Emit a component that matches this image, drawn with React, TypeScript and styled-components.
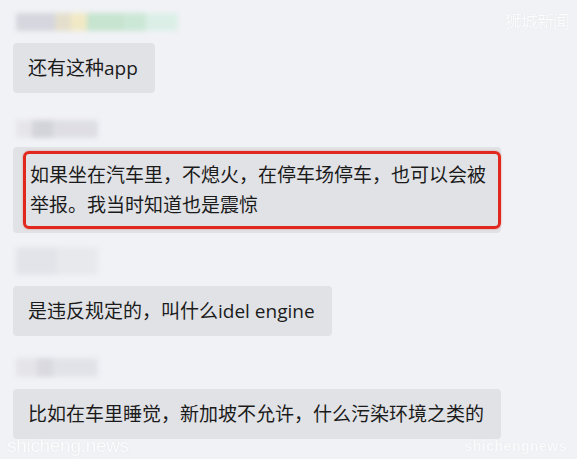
import React from 'react';
import styled, { createGlobalStyle } from 'styled-components';

const bg = '#f1f2f6';
const bubbleGrey = '#e1e2e6';
const textDark = '#1b1b1b';
const red = '#e0281f';

const GlobalStyle = createGlobalStyle`
  html, body {
    margin: 0;
    padding: 0;
    background: ${bg};
  }
  body {
    font-family: 'Open Sans', 'Noto Sans CJK SC', sans-serif;
  }
`;

interface Message {
  id: number;
  nameWidth: number;
  nameHeight: number;
  nameColors: string;
  gapAbove: number;
  gap: number;
  lines: string[];
  highlighted?: boolean;
}

const messages: Message[] = [
  {
    id: 1,
    nameWidth: 162,
    nameHeight: 18,
    nameColors:
      'linear-gradient(90deg, #d6d6de 0 24%, #e4dfcc 24% 34%, #f1e9c6 34% 44%, #c6e4cf 44% 66%, #cbe7d6 66% 80%, #dcefe7 80% 100%)',
    gapAbove: 13,
    gap: 12,
    lines: ['还有这种app'],
  },
  {
    id: 2,
    nameWidth: 82,
    nameHeight: 18,
    nameColors: 'linear-gradient(90deg, #e6e6ea 0 20%, #d3d3da 20% 45%, #dedee4 45% 100%)',
    gapAbove: 27,
    gap: 9,
    lines: ['如果坐在汽车里，不熄火，在停车场停车，也可以会被', '举报。我当时知道也是震惊'],
    highlighted: true,
  },
  {
    id: 3,
    nameWidth: 82,
    nameHeight: 28,
    nameColors: 'linear-gradient(90deg, #e3e4e9 0 50%, #e8e9ed 50% 100%)',
    gapAbove: 14,
    gap: 11,
    lines: ['是违反规定的，叫什么idel engine'],
  },
  {
    id: 4,
    nameWidth: 82,
    nameHeight: 19,
    nameColors: 'linear-gradient(90deg, #e4e4e9 0 25%, #d9d9df 25% 45%, #e2e3e8 45% 100%)',
    gapAbove: 22,
    gap: 12,
    lines: ['比如在车里睡觉，新加坡不允许，什么污染环境之类的'],
  },
];

export default function App() {
  return (
    <>
      <GlobalStyle />
      <Screen>
        <Chat>
          {messages.map((m) => (
            <MessageRow key={m.id} gapAbove={m.gapAbove} gap={m.gap}>
              <BlurredName w={m.nameWidth} h={m.nameHeight} colors={m.nameColors} />
              <Bubble highlighted={m.highlighted}>
                {m.lines.map((line, i) => (
                  <Line key={i}>{line}</Line>
                ))}
                {m.highlighted && <RedFrame />}
              </Bubble>
            </MessageRow>
          ))}
        </Chat>
        <MarkTop>狮城新闻</MarkTop>
        <MarkBottomLeft>shicheng.news</MarkBottomLeft>
        <MarkBottomRight>shichengnews</MarkBottomRight>
      </Screen>
    </>
  );
}

const Screen = styled.div`
  position: relative;
  width: 577px;
  height: 459px;
  overflow: hidden;
  background: ${bg};
`;

const Chat = styled.div`
  display: flex;
  flex-direction: column;
  align-items: flex-start;
  padding-left: 13px;
`;

const MessageRow = styled.div<{ gapAbove: number; gap: number }>`
  display: flex;
  flex-direction: column;
  align-items: flex-start;
  margin-top: ${({ gapAbove }) => gapAbove}px;
  gap: ${({ gap }) => gap}px;
`;

const BlurredName = styled.div<{ w: number; h: number; colors: string }>`
  width: ${({ w }) => w}px;
  height: ${({ h }) => h}px;
  margin-left: 3px;
  background: ${({ colors }) => colors};
  filter: blur(2.5px);
  border-radius: 3px;
`;

const Bubble = styled.div<{ highlighted?: boolean }>`
  position: relative;
  display: flex;
  flex-direction: column;
  padding: ${({ highlighted }) => (highlighted ? '13px 15px 13px 17px' : '10px 17px 10px 15px')};
  background: ${bubbleGrey};
  border-radius: 4px;
  color: ${textDark};
  font-size: 19px;
  line-height: 30px;
  white-space: nowrap;
`;

const Line = styled.span`
  display: block;
`;

const RedFrame = styled.div`
  position: absolute;
  left: 10px;
  top: 4px;
  right: 0;
  bottom: 4px;
  border: 3.5px solid ${red};
  border-radius: 6px;
  box-shadow: 0 0 2px rgba(224, 40, 31, 0.5);
`;

const Watermark = styled.div`
  position: absolute;
  color: rgba(255, 255, 255, 0.92);
  font-family: 'Noto Sans CJK SC', 'Noto Sans', sans-serif;
  text-shadow: 0 0 1px rgba(200, 200, 210, 0.6);
  filter: blur(0.4px);
  white-space: nowrap;
`;

const MarkTop = styled(Watermark)`
  top: 8px;
  right: 8px;
  font-size: 17px;
  letter-spacing: -1px;
`;

const MarkBottomLeft = styled(Watermark)`
  left: 7px;
  bottom: 2px;
  font-family: 'Liberation Sans', sans-serif;
  font-size: 19px;
  letter-spacing: -0.3px;
`;

const MarkBottomRight = styled(Watermark)`
  right: 10px;
  bottom: 5px;
  font-family: 'Liberation Sans', sans-serif;
  font-size: 14px;
  font-weight: 700;
  letter-spacing: 0.5px;
  opacity: 0.85;
`;
